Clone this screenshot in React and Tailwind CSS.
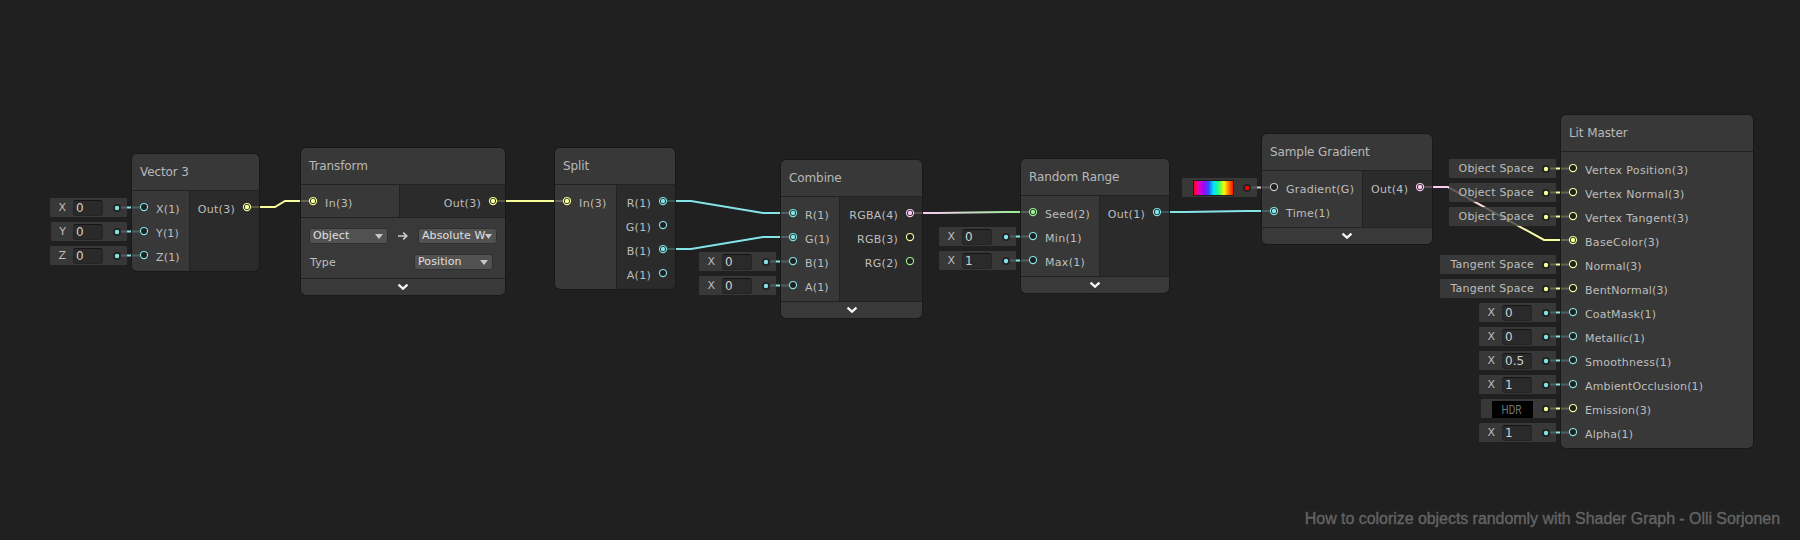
import React from "react";

const COLORS = {
  1: "#84e4e7",
  2: "#9aef92",
  3: "#f6ff9a",
  4: "#fbcbf4",
  G: "#c8c8c8",
};

function Port({ type, on }) {
  return (
    <svg viewBox="0 0 8 8" className="size-2 shrink-0 overflow-visible">
      <circle cx="4" cy="4" r="3.55" fill="#1f1f1f" stroke={COLORS[type]} strokeWidth="1.15" />
      {on && <circle cx="4" cy="4" r="2.2" fill={COLORS[type]} />}
    </svg>
  );
}

function Input({ label, type, on, tracking = "tracking-[0.16px]" }) {
  return (
    <div className="flex h-6 items-center gap-2">
      <Port type={type} on={on} />
      <span className={`relative top-[3px] text-[11px] leading-4 ${tracking}`}>{label}</span>
    </div>
  );
}

function Output({ label, type, on }) {
  return (
    <div className="flex h-6 items-center justify-end gap-2">
      <span className="relative top-[3px] text-[11px] leading-4 tracking-[0.28px]">{label}</span>
      <Port type={type} on={on} />
    </div>
  );
}

function Node({ title, place, inputWidth, inputs, outputs, footer, children }) {
  return (
    <section
      className={`absolute flex flex-col overflow-hidden rounded-[5px] text-[#bebebe] shadow-[0_0_0_1px_#191919] ${place}`}
    >
      <header className="flex h-9 items-center bg-[#3f3f3f]/80 pl-2 text-[12px] tracking-[-0.1px] text-[#b8b8b8]">
        {title}
      </header>
      <div className="flex border-t border-[#222222]">
        <div className={`bg-[#3f3f3f]/80 px-2 py-1 ${inputWidth}`}>{inputs}</div>
        {outputs && (
          <div className="flex-1 border-l border-[#222222] bg-[#2e2e2e]/80 bg-clip-padding px-2 py-1">
            {outputs}
          </div>
        )}
      </div>
      {children}
      {footer && (
        <footer className="flex h-[17px] items-center justify-center border-t border-[#222222] bg-[#393939]">
          <svg viewBox="0 0 10 6" className="h-[6px] w-[10px] overflow-visible">
            <path d="M0.5 0.6 L5 4.6 L9.5 0.6" fill="none" stroke="#f4f4f4" strokeWidth="2.3" />
          </svg>
        </footer>
      )}
    </section>
  );
}

function Slot({ place, type, color, children }) {
  return (
    <div
      className={`absolute flex h-[19px] items-center justify-end rounded-[1px] bg-[#3f3f3f]/80 pr-1.5 text-[#bebebe] ${place}`}
    >
      {children}
      <svg viewBox="0 0 8 8" className="relative top-[0.5px] size-2 shrink-0">
        <circle cx="4" cy="4" r="4" fill="#212121" />
        <circle cx="4" cy="4" r="2.2" fill={color || COLORS[type]} />
      </svg>
    </div>
  );
}

function NumberSlot({ place, label = "X", value }) {
  return (
    <Slot place={place} type="1">
      <span className="relative top-px mr-[7px] text-[11px]">{label}</span>
      <span className="mr-[10px] flex h-4 w-[30px] items-center rounded-[3px] border border-t-[#141414] border-[#242424] bg-[#2a2a2a] pl-[2px] text-[12px] text-[#d0d0d0]">
        {value}
      </span>
    </Slot>
  );
}

function SpaceSlot({ place, label }) {
  return (
    <Slot place={place} type="3">
      <span className="relative top-px mr-[8px] whitespace-nowrap text-[11px] tracking-[0.22px]">{label}</span>
    </Slot>
  );
}

function Dropdown({ label, tight }) {
  return (
    <div className="flex h-4 w-[79px] items-center justify-between rounded-[3px] border border-[#303030] bg-[#515151] pl-[3px] pr-[4px] text-[11px] tracking-[0.1px] text-[#e0e0e0]">
      <span className={`whitespace-nowrap ${tight ? "w-[63px]" : ""}`}>{label}</span>
      <svg viewBox="0 0 8 5" className={`h-[5px] shrink-0 ${tight ? "w-[7px]" : "w-2"}`} preserveAspectRatio="none">
        <path d="M0 0 H8 L4 5 Z" fill="#c8c8c8" />
      </svg>
    </div>
  );
}

const WIRES = [
  { d: "M247 207 H275 L285 201 H313", stroke: COLORS[3] },
  { d: "M493 201 H567", stroke: COLORS[3] },
  { d: "M663 201 H691 L763 213 H793", stroke: COLORS[1] },
  { d: "M663 249 H691 L763 237 H793", stroke: COLORS[1] },
  { d: "M910 213 H938 L1005 212 H1033", stroke: "url(#pinkGreen)" },
  { d: "M1157 212 H1185 L1246 211 H1274", stroke: COLORS[1] },
  { d: "M1420 187 H1448 L1544 240 H1573", stroke: "url(#pinkYellow)" },
];

const STUBS = [
  [144, 207, "1"],
  [144, 231, "1"],
  [144, 255, "1"],
  [793, 261, "1"],
  [793, 285, "1"],
  [1033, 236, "1"],
  [1033, 260, "1"],
  [1274, 187, "G"],
  [1573, 168, "3"],
  [1573, 192, "3"],
  [1573, 216, "3"],
  [1573, 264, "3"],
  [1573, 288, "3"],
  [1573, 312, "1"],
  [1573, 336, "1"],
  [1573, 360, "1"],
  [1573, 384, "1"],
  [1573, 408, "3"],
  [1573, 432, "1"],
];

function Wires() {
  return (
    <svg viewBox="0 0 1800 540" className="absolute inset-0 h-[540px] w-[1800px]" fill="none">
      <defs>
        <linearGradient id="pinkGreen" gradientUnits="userSpaceOnUse" x1="925" y1="0" x2="1020" y2="0">
          <stop offset="0" stopColor={COLORS[4]} />
          <stop offset="1" stopColor={COLORS[2]} />
        </linearGradient>
        <linearGradient id="pinkYellow" gradientUnits="userSpaceOnUse" x1="1445" y1="0" x2="1550" y2="0">
          <stop offset="0" stopColor={COLORS[4]} />
          <stop offset="1" stopColor={COLORS[3]} />
        </linearGradient>
      </defs>
      {WIRES.map((w) => (
        <path key={w.d} d={w.d} stroke={w.stroke} strokeWidth="2" />
      ))}
      {STUBS.map(([x, y, t]) => (
        <path key={`${x}-${y}`} d={`M${x - 27} ${y + 0.5} H${x}`} stroke={COLORS[t]} strokeWidth="2" />
      ))}
    </svg>
  );
}

export default function App() {
  return (
    <main className="relative h-[540px] w-[1800px] overflow-hidden bg-[#202020] font-['DejaVu_Sans',sans-serif]">
      <Wires />

      <NumberSlot place="left-[50px] top-[198px] w-[77px]" value="0" />
      <NumberSlot place="left-[51px] top-[222px] w-[76px]" label="Y" value="0" />
      <NumberSlot place="left-[50px] top-[246px] w-[77px]" label="Z" value="0" />
      <Node
        title="Vector 3"
        place="left-[132px] top-[154px] w-[127px]"
        inputWidth="w-[57px]"
        inputs={
          <>
            <Input label="X(1)" type="1" />
            <Input label="Y(1)" type="1" />
            <Input label="Z(1)" type="1" />
          </>
        }
        outputs={<Output label="Out(3)" type="3" on />}
      />

      <Node
        title="Transform"
        place="left-[301px] top-[148px] w-[204px]"
        inputWidth="w-[98px]"
        inputs={<Input label="In(3)" type="3" on tracking="tracking-[0.4px]" />}
        outputs={<Output label="Out(3)" type="3" on />}
        footer
      >
        <div className="flex h-[61px] flex-col gap-[10px] border-t border-[#222222] bg-[#393939] pl-2 pt-[10px] text-[11px]">
          <div className="flex h-4 items-center">
            <Dropdown label="Object" />
            <svg viewBox="0 0 10 8" className="mx-[10px] h-2 w-[10px]" fill="none">
              <path d="M0 4 H9 M5.2 0.6 L8.8 4 L5.2 7.4" stroke="#c8c8c8" strokeWidth="1.7" />
            </svg>
            <Dropdown label="Absolute W" tight />
          </div>
          <div className="flex h-4 items-center justify-between pr-3">
            <span className="relative top-px pl-px tracking-[0.16px]">Type</span>
            <Dropdown label="Position" />
          </div>
        </div>
      </Node>

      <Node
        title="Split"
        place="left-[555px] top-[148px] w-[120px]"
        inputWidth="w-[61px]"
        inputs={<Input label="In(3)" type="3" on tracking="tracking-[0.4px]" />}
        outputs={
          <>
            <Output label="R(1)" type="1" on />
            <Output label="G(1)" type="1" />
            <Output label="B(1)" type="1" on />
            <Output label="A(1)" type="1" />
          </>
        }
      />

      <NumberSlot place="left-[699px] top-[252px] w-[77px]" value="0" />
      <NumberSlot place="left-[699px] top-[276px] w-[77px]" value="0" />
      <Node
        title="Combine"
        place="left-[781px] top-[160px] w-[141px]"
        inputWidth="w-[58px]"
        inputs={
          <>
            <Input label="R(1)" type="1" on />
            <Input label="G(1)" type="1" on />
            <Input label="B(1)" type="1" />
            <Input label="A(1)" type="1" />
          </>
        }
        outputs={
          <>
            <Output label="RGBA(4)" type="4" on />
            <Output label="RGB(3)" type="3" />
            <Output label="RG(2)" type="2" />
          </>
        }
        footer
      />

      <NumberSlot place="left-[939px] top-[227px] w-[77px]" value="0" />
      <NumberSlot place="left-[939px] top-[251px] w-[77px]" value="1" />
      <Node
        title="Random Range"
        place="left-[1021px] top-[159px] w-[148px]"
        inputWidth="w-[78px]"
        inputs={
          <>
            <Input label="Seed(2)" type="2" on tracking="tracking-[0.3px]" />
            <Input label="Min(1)" type="1" tracking="tracking-[0.3px]" />
            <Input label="Max(1)" type="1" tracking="tracking-[0.3px]" />
          </>
        }
        outputs={<Output label="Out(1)" type="1" on />}
        footer
      />

      <Slot place="left-[1182px] top-[178px] w-[75px]" color="#ff0000">
        <span className="mr-[9px] h-4 w-[41px] border border-[#1d1d1d] bg-[linear-gradient(90deg,#ff0018_0%,#f000a0_10%,#a800ff_24%,#2a50ff_37%,#00e0ff_50%,#20ff80_62%,#f8ff00_77%,#ff8000_88%,#ff1000_100%)]" />
      </Slot>
      <Node
        title="Sample Gradient"
        place="left-[1262px] top-[134px] w-[170px]"
        inputWidth="w-[100px]"
        inputs={
          <>
            <Input label="Gradient(G)" type="G" tracking="tracking-[0.3px]" />
            <Input label="Time(1)" type="1" on tracking="tracking-[0.25px]" />
          </>
        }
        outputs={<Output label="Out(4)" type="4" on />}
        footer
      />

      <SpaceSlot place="left-[1449px] top-[159px] w-[107px]" label="Object Space" />
      <SpaceSlot place="left-[1449px] top-[183px] w-[107px]" label="Object Space" />
      <SpaceSlot place="left-[1449px] top-[207px] w-[107px]" label="Object Space" />
      <SpaceSlot place="left-[1440px] top-[255px] w-[116px]" label="Tangent Space" />
      <SpaceSlot place="left-[1440px] top-[279px] w-[116px]" label="Tangent Space" />
      <NumberSlot place="left-[1479px] top-[303px] w-[77px]" value="0" />
      <NumberSlot place="left-[1479px] top-[327px] w-[77px]" value="0" />
      <NumberSlot place="left-[1479px] top-[351px] w-[77px]" value="0.5" />
      <NumberSlot place="left-[1479px] top-[375px] w-[77px]" value="1" />
      <Slot place="left-[1481px] top-[399px] w-[75px]" type="3">
        <span className="relative top-px mr-[9px] flex h-[17px] w-[41px] items-center justify-center bg-black pr-[2px] font-['Roboto',sans-serif] text-[10px] text-[#787878]">
          <span className="scale-y-[1.2]">HDR</span>
        </span>
      </Slot>
      <NumberSlot place="left-[1479px] top-[423px] w-[77px]" value="1" />
      <Node
        title="Lit Master"
        place="left-[1561px] top-[115px] w-[192px]"
        inputWidth="w-full"
        inputs={
          <>
            <Input label="Vertex Position(3)" type="3" tracking="tracking-[0.34px]" />
            <Input label="Vertex Normal(3)" type="3" tracking="tracking-[0.34px]" />
            <Input label="Vertex Tangent(3)" type="3" tracking="tracking-[0.34px]" />
            <Input label="BaseColor(3)" type="3" on tracking="tracking-[0.3px]" />
            <Input label="Normal(3)" type="3" />
            <Input label="BentNormal(3)" type="3" />
            <Input label="CoatMask(1)" type="1" />
            <Input label="Metallic(1)" type="1" />
            <Input label="Smoothness(1)" type="1" tracking="tracking-[0.26px]" />
            <Input label="AmbientOcclusion(1)" type="1" />
            <Input label="Emission(3)" type="3" />
            <Input label="Alpha(1)" type="1" />
          </>
        }
      />

      <p className="absolute right-[20px] bottom-[9px] whitespace-nowrap font-['Liberation_Sans',sans-serif] text-[16px] leading-6 tracking-[-0.05px] text-[#646464] [-webkit-text-stroke:0.35px_#646464]">
        How to colorize objects randomly with Shader Graph - Olli Sorjonen
      </p>
    </main>
  );
}
